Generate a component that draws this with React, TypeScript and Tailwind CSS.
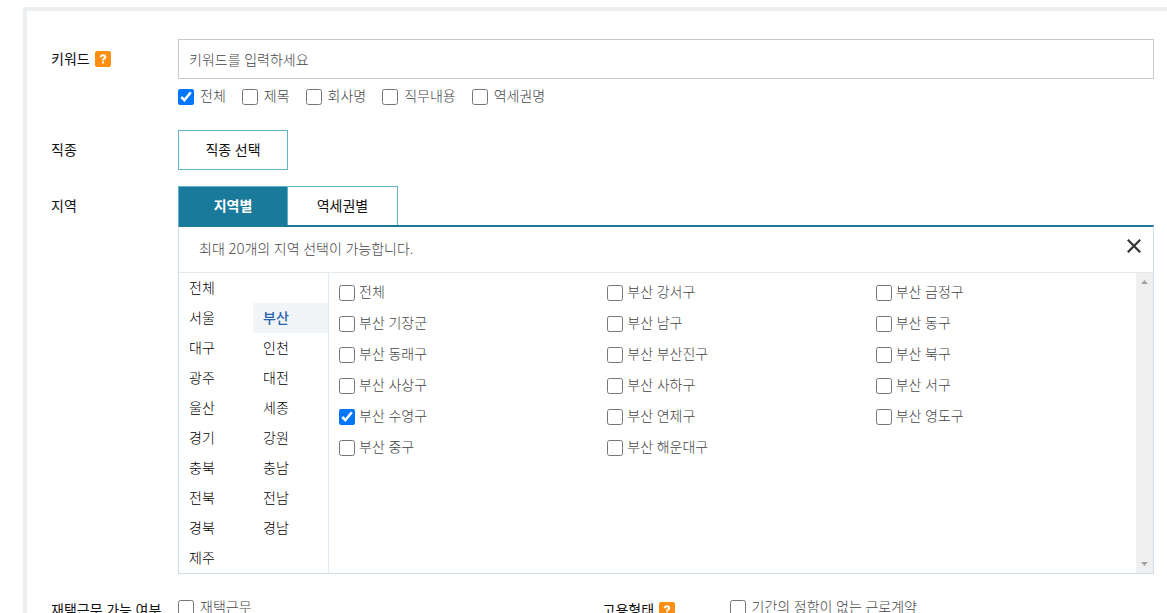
import { useState } from 'react';
import type { ReactNode } from 'react';
import clsx from 'clsx';

const keywordScopes = ['전체', '제목', '회사명', '직무내용', '역세권명'];

// empty string keeps the second cell of a row blank
const regions = [
  '전체', '',
  '서울', '부산',
  '대구', '인천',
  '광주', '대전',
  '울산', '세종',
  '경기', '강원',
  '충북', '충남',
  '전북', '전남',
  '경북', '경남',
  '제주', '',
];

const districts = [
  '전체', '부산 강서구', '부산 금정구',
  '부산 기장군', '부산 남구', '부산 동구',
  '부산 동래구', '부산 부산진구', '부산 북구',
  '부산 사상구', '부산 사하구', '부산 서구',
  '부산 수영구', '부산 연제구', '부산 영도구',
  '부산 중구', '부산 해운대구',
];

interface CheckProps {
  label: string;
  defaultChecked?: boolean;
  className?: string;
}

function Check({ label, defaultChecked, className = 'gap-1.5' }: CheckProps) {
  return (
    <label className={clsx('flex items-center font-light text-[#444]', className)}>
      <input type="checkbox" defaultChecked={defaultChecked} className="m-0 size-4 shrink-0" />
      <span className="pb-0.5 whitespace-nowrap">{label}</span>
    </label>
  );
}

function HelpButton() {
  return (
    <button
      type="button"
      aria-label="도움말"
      className="flex size-4 items-center justify-center rounded-xs bg-[#ff8f12]"
    >
      <svg viewBox="0 0 16 16" className="size-4" fill="none" stroke="#fff" strokeWidth="2">
        <path d="M5.8 6.2C5.8 4.7 6.8 4.2 8 4.2s2.2.7 2.2 1.9C10.2 7.6 8 7.6 8 9.5" />
        <path d="M8 10.5v2" />
      </svg>
    </button>
  );
}

interface RowProps {
  title: string;
  help?: boolean;
  htmlFor?: string;
  children: ReactNode;
}

function Row({ title, help, htmlFor, children }: RowProps) {
  return (
    <div className="flex min-w-0 flex-1">
      <div className="flex h-10 w-[127px] shrink-0 items-center gap-[5px] whitespace-nowrap text-[#111]">
        {htmlFor ? <label htmlFor={htmlFor}>{title}</label> : <span>{title}</span>}
        {help && <HelpButton />}
      </div>
      <div className="min-w-0 flex-1">{children}</div>
    </div>
  );
}

function RegionPanel() {
  const [region, setRegion] = useState('부산');

  return (
    <div className="border border-t-2 border-[#d3dfe8] border-t-[#1a7a9b]">
      <div className="flex h-[46px] items-center justify-between border-b border-[#e1eaf1] pr-3 pl-5">
        <p className="pb-0.5 font-light text-[#444]">최대 20개의 지역 선택이 가능합니다.</p>
        <button type="button" aria-label="닫기" className="mb-2">
          <svg viewBox="0 0 14 14" className="size-3.5" stroke="#333" strokeWidth="2.2">
            <path d="M.8.8l12.4 12.4M13.2.8L.8 13.2" />
          </svg>
        </button>
      </div>
      <div className="flex">
        <div className="grid w-[150px] shrink-0 grid-cols-[74px_75px] border-r border-[#e1eaf1]">
          {regions.map((name, i) =>
            name ? (
              <button
                key={i}
                type="button"
                onClick={() => setRegion(name)}
                className={clsx(
                  'h-[30px] pl-2.5 text-left',
                  name === region ? 'bg-[#f1f5f7] font-medium text-[#2a64b0]' : 'font-light text-black'
                )}
              >
                {name}
              </button>
            ) : (
              <span key={i} />
            )
          )}
        </div>
        <div className="grid flex-1 auto-rows-[31px] grid-cols-3 pt-1 pr-0.5">
          {districts.map((name) => (
            <Check key={name} label={name} defaultChecked={name === '부산 수영구'} className="gap-1 pl-2.5" />
          ))}
        </div>
        <div className="flex w-[17px] flex-col items-center justify-between bg-[#f0f0f0] py-[7px]">
          <svg viewBox="0 0 7 4" className="h-1 w-[7px]" fill="#a3a3a3">
            <path d="M0 4L3.5 0L7 4z" />
          </svg>
          <svg viewBox="0 0 7 4" className="h-1 w-[7px]" fill="#a3a3a3">
            <path d="M0 0h7L3.5 4z" />
          </svg>
        </div>
      </div>
    </div>
  );
}

export default function App() {
  const [tab, setTab] = useState('지역별');

  return (
    <div className="h-screen overflow-hidden bg-white pt-[7px] pl-[23px] font-['Noto_Sans','Noto_Sans_CJK_KR',sans-serif] text-sm">
      <form className="flex flex-col gap-4 border-t-4 border-l-4 border-[#ebeff2] pt-7 pr-[13px] pb-7 pl-6">
        <Row title="키워드" help htmlFor="keyword">
          <input
            id="keyword"
            type="text"
            placeholder="키워드를 입력하세요"
            className="h-10 w-full border border-[#c8c8c8] px-2.5 font-light placeholder:text-[#444]"
          />
          <div className="flex h-[35px] items-center gap-4">
            {keywordScopes.map((name, i) => (
              <Check key={name} label={name} defaultChecked={i === 0} />
            ))}
          </div>
        </Row>

        <Row title="직종">
          <button type="button" className="h-10 w-[110px] border border-[#62b1ca] text-[#111]">
            직종 선택
          </button>
        </Row>

        <Row title="지역">
          <div className="flex">
            {['지역별', '역세권별'].map((name) => (
              <button
                key={name}
                type="button"
                onClick={() => setTab(name)}
                className={clsx(
                  'h-[39px] w-[110px] border border-b-0 border-[#62b1ca]',
                  name === tab ? 'bg-[#1a7a9b] font-bold text-white' : 'border-l-0 text-[#111]'
                )}
              >
                {name}
              </button>
            ))}
          </div>
          <RegionPanel />
        </Row>

        <div className="flex">
          <Row title="재택근무 가능 여부">
            <div className="flex h-9 items-center">
              <Check label="재택근무" />
            </div>
          </Row>
          <Row title="고용형태" help>
            <div className="flex h-9 items-center">
              <Check label="기간의 정함이 없는 근로계약" />
            </div>
          </Row>
        </div>
      </form>
    </div>
  );
}
